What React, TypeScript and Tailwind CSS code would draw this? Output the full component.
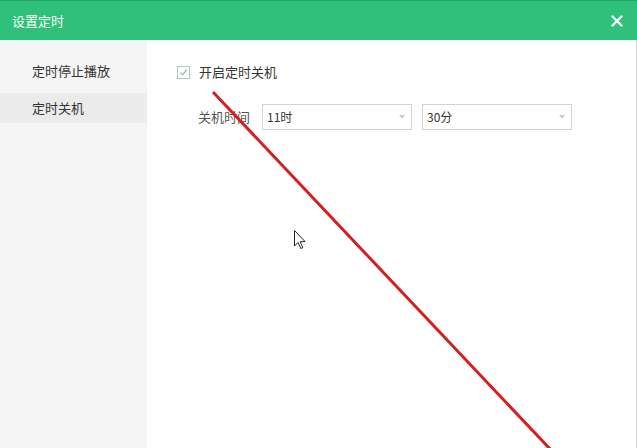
import React from "react";

export default function App() {
  return (
    <div
      className="relative w-[637px] h-[448px] overflow-hidden bg-white flex flex-col"
      style={{ fontFamily: '"Noto Sans CJK SC", "Noto Sans", sans-serif' }}
    >
      <div className="h-[40px] shrink-0 bg-[#2fc17b] border-t border-[#25a466] flex items-center justify-between pl-[12px] pr-[14px]">
        <span className="text-[13px] text-white leading-none">设置定时</span>
        <svg width="12" height="12" viewBox="0 0 12 12">
          <path d="M1.5 1.5 L10.5 10.5 M10.5 1.5 L1.5 10.5" stroke="#ffffff" strokeWidth="2.4" strokeLinecap="round" />
        </svg>
      </div>
      <div className="flex flex-1 border-r border-[#d6d6d6]">
        <div className="w-[147px] shrink-0 bg-[#f5f5f5] pt-[16px] flex flex-col">
          <div className="h-[30px] flex items-center pl-[32px] text-[13px] text-[#333]">定时停止播放</div>
          <div className="h-[7px]" />
          <div className="h-[30px] flex items-center pl-[32px] text-[13px] text-[#333] bg-[#ebebeb]">定时关机</div>
        </div>
        <div className="flex-1 flex flex-col pl-[30px] pt-[24px]">
          <div className="flex items-center h-[16px]">
            <div className="w-[13px] h-[13px] border border-[#9fd0bd] bg-white flex items-center justify-center">
              <svg width="9" height="9" viewBox="0 0 9 9">
                <path d="M1.2 4.6 L3.6 6.8 L7.8 1.8" stroke="#6bb89a" strokeWidth="1.1" fill="none" />
              </svg>
            </div>
            <span className="ml-[9px] text-[13px] text-[#333]">开启定时关机</span>
          </div>
          <div className="flex items-center mt-[24px] pl-[21px]">
            <span className="text-[13px] text-[#555] w-[64px]">关机时间</span>
            <div className="w-[150px] h-[26px] border border-[#d2d2d2] flex items-center justify-between pl-[4px] pr-[6px]">
              <span className="text-[12px] text-[#333]">11时</span>
              <svg width="6" height="4" viewBox="0 0 6 4"><path d="M0 0 L6 0 L3 3.5 Z" fill="#c8c8c8" /></svg>
            </div>
            <div className="w-[150px] h-[26px] ml-[10px] border border-[#d2d2d2] flex items-center justify-between pl-[4px] pr-[6px]">
              <span className="text-[12px] text-[#333]">30分</span>
              <svg width="6" height="4" viewBox="0 0 6 4"><path d="M0 0 L6 0 L3 3.5 Z" fill="#c8c8c8" /></svg>
            </div>
          </div>
        </div>
      </div>
      <svg className="absolute left-0 top-0 pointer-events-none" width="637" height="448" viewBox="0 0 637 448">
        <line x1="213" y1="92" x2="551" y2="450" stroke="#d41f1f" strokeWidth="3" />
        <path
          d="M294.5 230.5 L294.5 246 L298 242.5 L300.8 248.5 L302.8 247.6 L300.2 241.8 L305 241.5 Z"
          fill="#ffffff"
          stroke="#222222"
          strokeWidth="1"
          strokeLinejoin="round"
        />
      </svg>
    </div>
  );
}
